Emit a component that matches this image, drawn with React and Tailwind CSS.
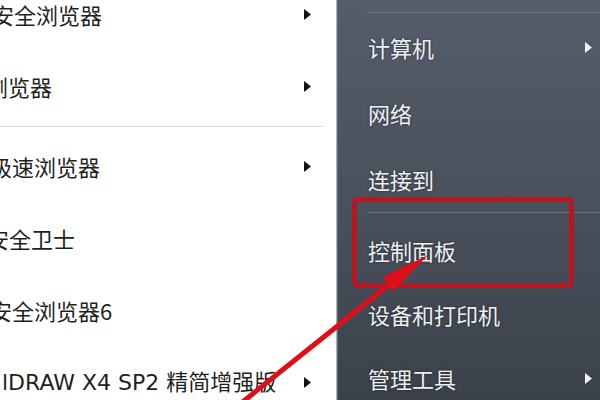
import React from 'react';

const font = { fontFamily: '"Noto Sans CJK SC", "Noto Sans", sans-serif' };

const leftItems = [
  { label: '安全浏览器', shift: '-ml-[8px]', arrow: true },
  { label: '浏览器', shift: '-ml-[14px]', arrow: true },
  { sep: true },
  { label: '极速浏览器', shift: '-ml-[10px]', arrow: true },
  { label: '安全卫士', shift: '-ml-[13px]', arrow: false },
  { label: '安全浏览器6', shift: '-ml-[10px]', arrow: false },
  { label: 'lDRAW X4 SP2 精简增强版', shift: 'ml-[2px]', arrow: true, wide: true },
];

const rightItems = [
  { label: '计算机', arrow: true, h: 'h-[66px]' },
  { label: '网络', arrow: false, h: 'h-[66px]' },
  { label: '连接到', arrow: false, h: 'h-[66px]' },
  { sep: true },
  { label: '控制面板', arrow: false, h: 'h-[64px]' },
  { label: '设备和打印机', arrow: false, h: 'h-[64px]' },
  { label: '管理工具', arrow: true, h: 'h-[64px]' },
];

const Tri = ({ color }) => (
  <svg width="7" height="11" viewBox="0 0 7 11">
    <polygon points="0,0 7,5.5 0,11" fill={color} />
  </svg>
);

const App = () => {
  return (
    <div className="relative w-[600px] h-[400px] overflow-hidden flex" style={font}>
      {/* all programs list, scrolled so the first row is partly hidden */}
      <div className="w-[337px] h-full bg-white border-r border-[#aeb2b8] overflow-hidden">
        <div className="flex flex-col -mt-[22px]">
          {leftItems.map((item, i) =>
            item.sep ? (
              <div key={i} className="h-[8px] flex items-center pr-[13px]">
                <div className="w-full h-px bg-[#d6d8db]" />
              </div>
            ) : (
              <div key={i} className="h-[72px] shrink-0 flex items-center">
                <span
                  className={`flex-1 whitespace-nowrap text-[22px] text-[#1f1f1f] ${item.shift} ${
                    item.wide ? 'font-["DejaVu_Sans","Noto_Sans_CJK_SC",sans-serif]' : ''
                  }`}
                >
                  {item.label}
                </span>
                {item.arrow && (
                  <span className="w-[7px] mr-[25px] flex items-center">
                    <Tri color="#111" />
                  </span>
                )}
              </div>
            )
          )}
        </div>
      </div>

      {/* right column */}
      <div className="flex-1 h-full flex flex-col border-l border-[#646c78] bg-gradient-to-b from-[#555d6a] via-[#4a515d] to-[#3c424b]">
        <div className="h-[12px] shrink-0" />
        <div className="h-px ml-[29px] bg-[#6b727d] shrink-0" />
        <div className="h-[1px] shrink-0" />
        {rightItems.map((item, i) =>
          item.sep ? (
            <div key={i} className="shrink-0">
              <div className="h-px ml-[29px] bg-[#68707b]" />
              <div className="h-[5px]" />
            </div>
          ) : (
            <div key={i} className={`${item.h} shrink-0 flex items-center pl-[30px] pr-[8px]`}>
              <span className="flex-1 text-[22px] text-[#eef0f2] [text-shadow:0_0_3px_rgba(0,0,0,0.45)]">{item.label}</span>
              {item.arrow && <Tri color="#f2f2f2" />}
            </div>
          )
        )}
      </div>

      {/* red highlight box */}
      <div className="absolute left-[352px] top-[197px] w-[222px] h-[91px] border-[5px] border-[#c0141d] rounded-[6px] opacity-90 blur-[0.6px]" />

      {/* red arrow */}
      <svg className="absolute left-0 top-0" width="600" height="400" viewBox="0 0 600 400">
        <line x1="240" y1="404" x2="400" y2="276" stroke="#dd0f1a" strokeWidth="5" strokeLinecap="round" />
        <polygon points="428,255 383,277 393,291" fill="#e0101b" />
      </svg>
    </div>
  );
};

export default App;
